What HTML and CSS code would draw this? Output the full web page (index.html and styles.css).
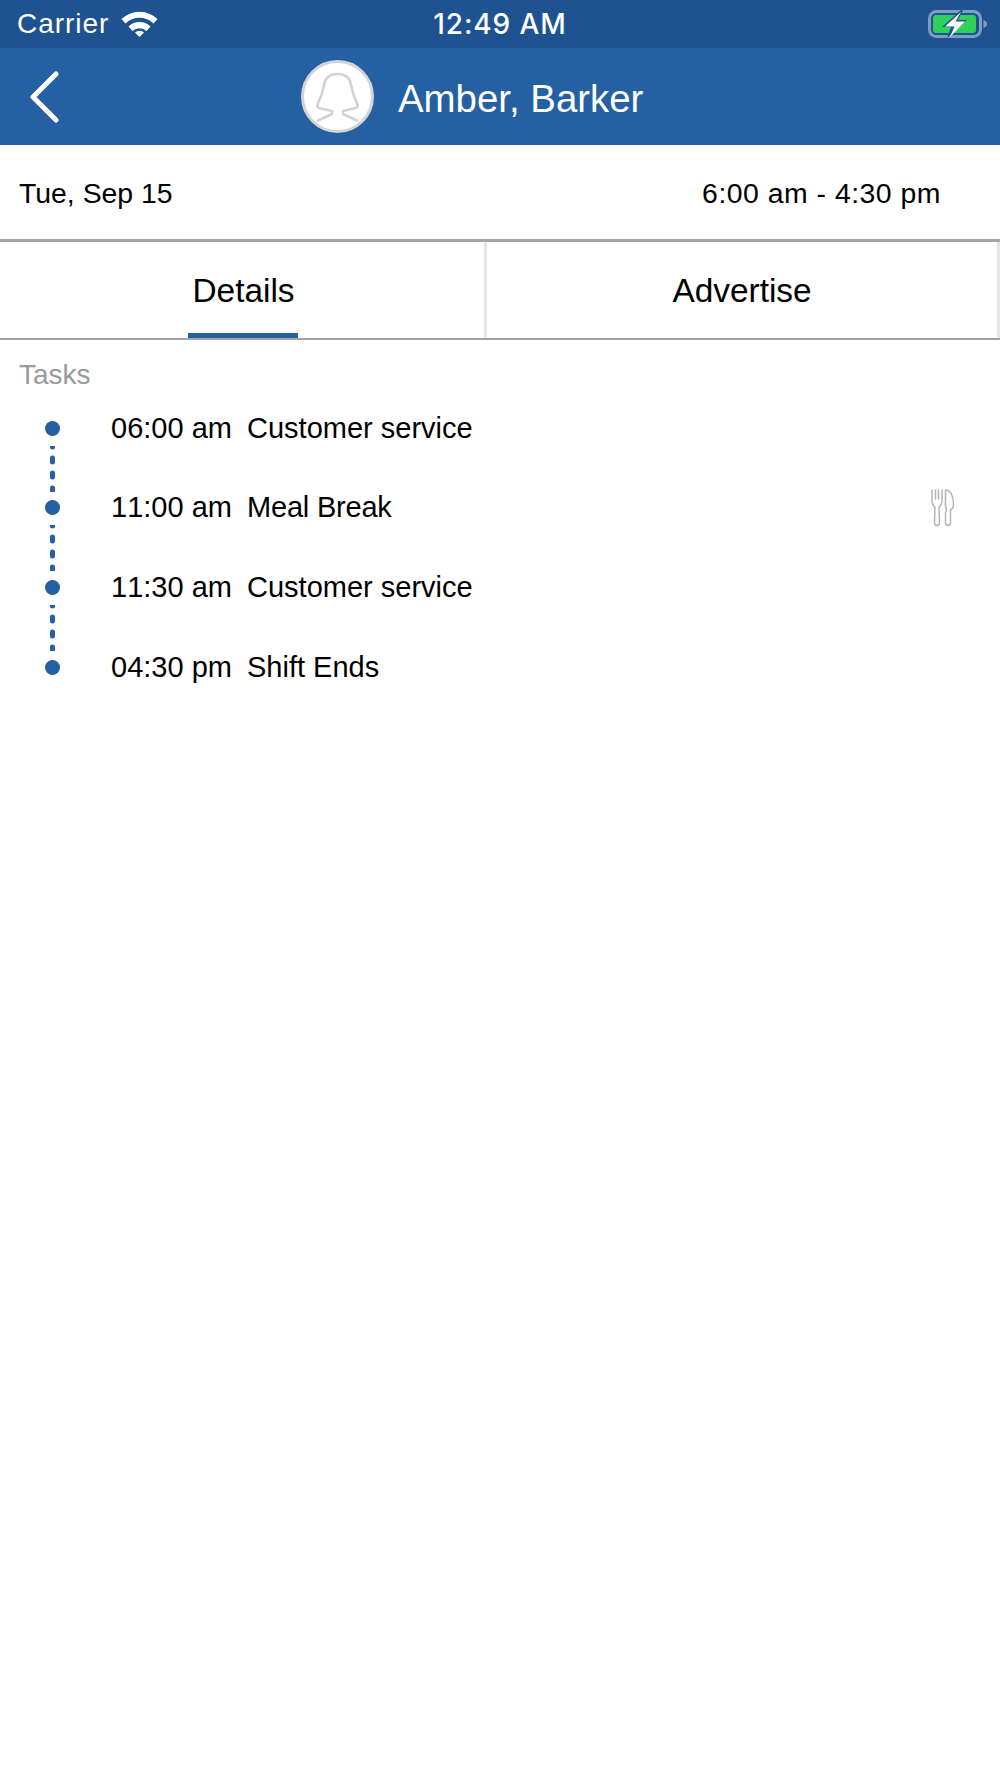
FILE: index.html
```html
<!DOCTYPE html>
<html lang="en">
<head>
<meta charset="utf-8">
<title>Amber, Barker</title>
<link rel="stylesheet" href="styles.css">
</head>
<body>
<div class="app">
  <div class="status">
    <div class="status-left">
      <span class="carrier">Carrier</span>
      <svg class="wifi" width="37" height="26" viewBox="0 0 37 26" fill="#fff"><path d="M.5 8A26 26 0 0 1 36.500 8L32.500 12.500A20 20 0 0 0 4.500 12.500Z"/><path d="M7.500 15.500A16 16 0 0 1 29.500 15.500L25.500 20A10 10 0 0 0 11.500 20Z"/><path d="M14 21.500A6.500 6.500 0 0 1 23 21.500L18.500 26Z"/></svg>
    </div>
    <span class="clock">12:49 AM</span>
    <svg class="battery" width="60" height="28" viewBox="0 0 60 28">
      <rect x="1.500" y="1.500" width="51" height="25" rx="7" fill="none" stroke="#7f9dc2" stroke-width="3"/>
      <rect x="5" y="5" width="43" height="18" rx="3" fill="#30d158"/>
      <path d="M55.500 10c2.500.8 3.500 2.400 3.500 4s-1 3.200-3.500 4Z" fill="#7f9dc2"/>
      <path d="M33 0 14 17h9l-4 11 20-18h-9l5-10Z" fill="#1e5290"/>
      <path d="M33 2 17 16.500h9.500L22 27 37 11.500h-9.500Z" fill="#fff"/>
    </svg>
  </div>
  <header class="nav">
    <svg class="back" width="32" height="52" viewBox="0 0 32 52"><path d="M28 3 5 26l23 23" fill="none" stroke="#fff" stroke-width="5" stroke-linecap="round" stroke-linejoin="round"/></svg>
    <div class="avatar">
      <svg width="67" height="67" viewBox="2 2 67 67"><path d="M15 60 30 53V50L17 47C15.500 46.500 15 45 16 42 19 36 21 30 22 24 23 17 27 13 35.500 13S48 17 49 24C50 30 52 36 55 42 56 45 55.500 46.500 54 47L41 50V53L56 60" fill="none" stroke="#d2d2d2" stroke-width="2.600" stroke-linejoin="round"/></svg>
    </div>
    <h1 class="name">Amber, Barker</h1>
  </header>
  <div class="date-row">
    <span class="date">Tue, Sep 15</span>
    <span class="hours">6:00 am - 4:30 pm</span>
  </div>
  <nav class="tabs">
    <div class="tab tab-details"><span>Details</span><i class="tab-mark"></i></div>
    <div class="tab tab-advertise"><span>Advertise</span></div>
  </nav>
  <section class="tasks">
    <div class="tasks-title">Tasks</div>
    <ul class="timeline">
      <li class="task">
        <div class="marker"><i class="dot"></i><svg class="link" width="5" height="46" viewBox="0 0 5 46"><line x1="2.500" y1="-3" x2="2.500" y2="50" class="link-line"/></svg></div>
        <span class="time">06:00 am</span><span class="label">Customer service</span>
      </li>
      <li class="task">
        <div class="marker"><i class="dot"></i><svg class="link" width="5" height="46" viewBox="0 0 5 46"><line x1="2.500" y1="-3" x2="2.500" y2="50" class="link-line"/></svg></div>
        <span class="time">11:00 am</span><span class="label label-meal">Meal Break</span>
        <svg class="meal" width="24" height="38" viewBox="0 0 24 38" fill="none" stroke="#b4b4b4" stroke-width="1.500" stroke-linejoin="round" stroke-linecap="round">
          <path d="M1 1V12C1 15.500 2.500 17 4 18.500L3.500 33C3.500 35.500 4.500 36.500 6 36.500S8.500 35.500 8.500 33L8 18.500C9.500 17 11 15.500 11 12V1"/>
          <path d="M4.500 1V10M7.500 1V10"/>
          <path d="M14.500 1C19.500 1 22.500 7 22.500 15 22.500 18 21.500 20 19.500 20.500V33C19.500 35.500 18.500 36.500 17 36.500S14.500 35.500 14.500 33V24C16 21.500 16 20 14.500 17.500Z"/>
        </svg>
      </li>
      <li class="task">
        <div class="marker"><i class="dot"></i><svg class="link" width="5" height="46" viewBox="0 0 5 46"><line x1="2.500" y1="-3" x2="2.500" y2="50" class="link-line"/></svg></div>
        <span class="time">11:30 am</span><span class="label">Customer service</span>
      </li>
      <li class="task">
        <div class="marker"><i class="dot"></i></div>
        <span class="time">04:30 pm</span><span class="label">Shift Ends</span>
      </li>
    </ul>
  </section>
</div>
</body>
</html>
```
FILE: styles.css
```css
* { box-sizing: border-box; }
html, body { margin: 0; padding: 0; background: #fff; }
body { font-family: "Liberation Sans", Arial, sans-serif; color: #000; }
.app { width: 1000px; height: 1778px; overflow: hidden; background: #fff; }

.status { height: 48px; background: #1e5290; color: #fff; display: flex; align-items: center; justify-content: space-between; position: relative; padding: 0 12px 0 17px; }
.status-left { display: flex; align-items: center; gap: 12px; }
.carrier { font-size: 28px; letter-spacing: .95px; line-height: 52px; }
.wifi { display: block; }
.clock { position: absolute; left: 0; right: 0; text-align: center; font-family: "Inter", sans-serif; font-weight: 500; font-size: 28px; letter-spacing: .9px; line-height: 53px; pointer-events: none; }
.battery { display: block; }

.nav { height: 97px; background: #2460a2; display: flex; align-items: center; padding-left: 28px; color: #fff; }
.back { display: block; margin-right: 240px; flex: none; margin-top: 1px; }
.avatar { width: 73px; height: 73px; border-radius: 50%; background: #fff; border: 3px solid #d4d4d4; margin-right: 24px; flex: none; overflow: hidden; margin-left: 1px; }
.avatar svg { display: block; }
.name { font-size: 38.400px; font-weight: 400; margin: 4px 0 0; line-height: 48px; }

.date-row { height: 97px; border-bottom: 3px solid #a6a6a6; display: flex; align-items: center; justify-content: space-between; padding: 2px 59px 0 19px; font-size: 28.400px; }
.hours { letter-spacing: .5px; }
.tabs { height: 98px; display: flex; border-bottom: 2px solid #a3a3a3; }
.tab { font-size: 33.400px; display: flex; align-items: center; justify-content: center; position: relative; padding-top: 2px; border-right: 3px solid #e6e6e6; }
.tab-details { width: 487px; padding-left: 3px; }
.tab-advertise { width: 513px; }
.tab-mark { position: absolute; left: 188px; width: 110px; height: 5px; bottom: 0; background: #2460a2; }

.tasks { padding: 19px 0 0 19px; }
.tasks-title { font-size: 28px; line-height: 32px; color: #9a9a9a; }
.timeline { list-style: none; margin: 29.500px 0 0; padding: 0; }
.task { height: 79.700px; display: flex; align-items: flex-start; position: relative; padding-right: 45px; font-size: 29px; line-height: 15px; }
.marker { width: 26px; margin-left: 26px; flex: none; display: flex; flex-direction: column; align-items: flex-start; margin-right: 40px; }
.dot { width: 15px; height: 15px; border-radius: 50%; background: #2460a2; display: block; }
.link { display: block; margin: 10px 0 0 5px; }
.link-line { stroke: #2460a2; stroke-width: 5; stroke-linecap: round; stroke-dasharray: 4 11; }
.time { width: 136px; flex: none; font-kerning: none; }
.label-meal { letter-spacing: -.2px; }
.meal { display: block; margin: -11px 0 0 auto; }
```
